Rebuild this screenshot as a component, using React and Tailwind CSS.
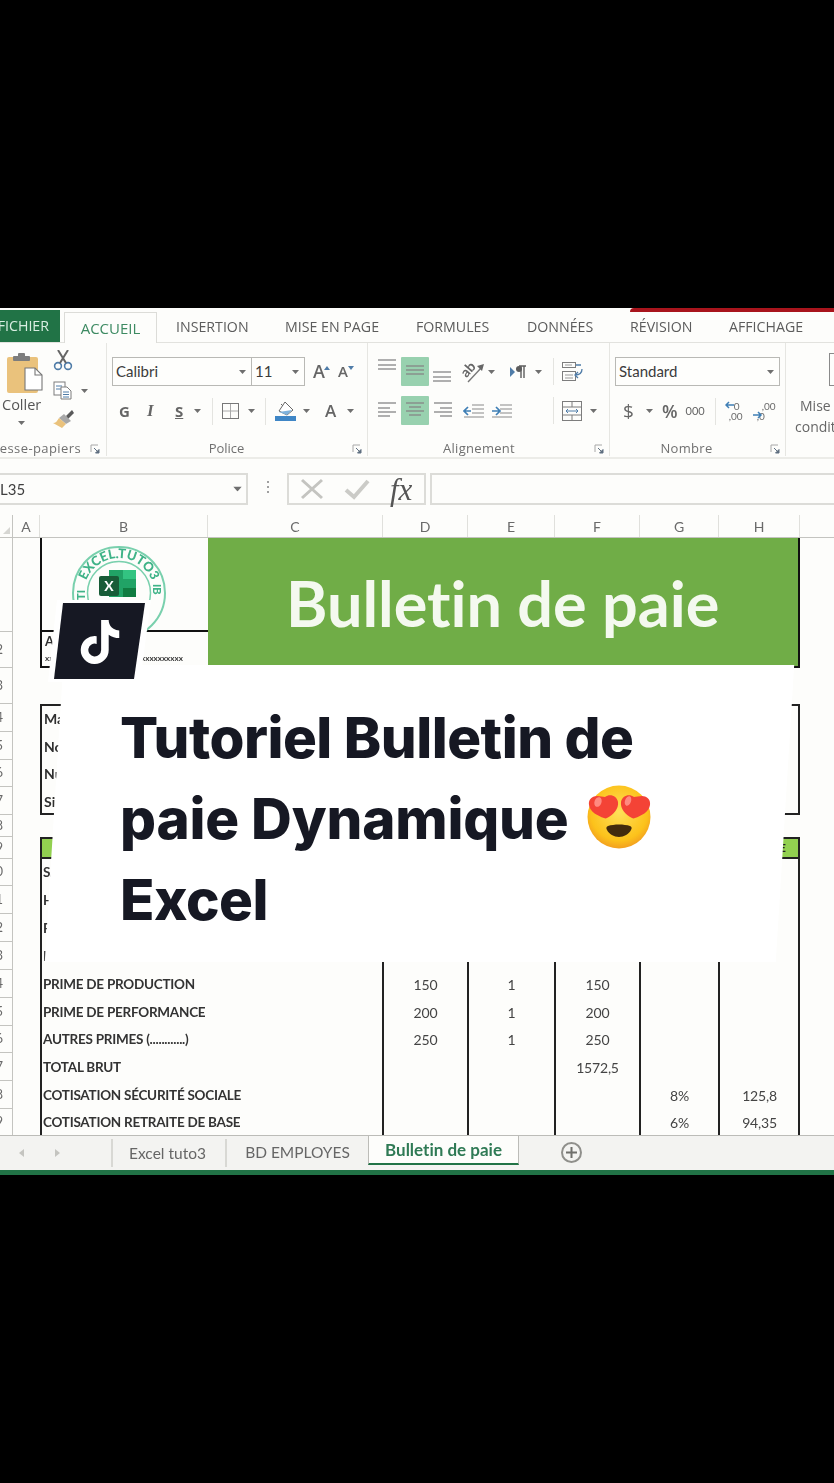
import React from "react";
import { FaTiktok } from "react-icons/fa6";

const Caret = ({ className = "" }) => (
  <svg width="7" height="4" viewBox="0 0 7 4" className={"shrink-0 " + className}><path d="M0 0h7L3.5 4z" fill="#6f6f6f" /></svg>
);

const Launcher = ({ className = "" }) => (
  <svg width="11" height="10" viewBox="0 0 11 10" className={"shrink-0 " + className}>
    <path d="M1 8V1h7" fill="none" stroke="#a8a8a8" />
    <path d="M4 4l5 5M9 5.5V9H5.5z" fill="#5f6f80" stroke="#5f6f80" />
  </svg>
);

const Lines = ({ rows, h = 29 }) => (
  <svg width="18" height={h} viewBox={`0 0 18 ${h}`} className="shrink-0">
    {rows.map(([x1, x2, y], i) => (
      <path key={i} d={`M${x1} ${y}H${x2}`} stroke="#858585" strokeWidth="1.3" />
    ))}
  </svg>
);

const Highlight = ({ children }) => (
  <div className="flex h-[29px] w-[28px] shrink-0 items-center justify-center rounded-[1px] bg-[#98d1af]">{children}</div>
);

const Sep = ({ className = "" }) => <div className={"h-[27px] w-px shrink-0 bg-[#e4e4e0] " + className} />;

const GroupLabel = ({ children, launcher = true, className = "" }) => (
  <div className={"mt-auto flex h-[14px] shrink-0 items-center text-[13px] text-[#707070] " + className}>
    <span className="flex-1 text-center whitespace-nowrap">{children}</span>
    {launcher && <Launcher className="mr-[4px]" />}
  </div>
);

const Combo = ({ label, className = "" }) => (
  <div className={"flex h-[29px] shrink-0 items-center justify-between border border-[#b9b9b5] bg-[#fefefc] pl-[3px] pr-[5px] text-[15px] text-[#3b3b3b] " + className}>
    <span>{label}</span>
    <Caret />
  </div>
);

const Clipboard = () => (
  <svg width="36" height="41" viewBox="0 0 36 41" className="shrink-0">
    <rect x="0" y="4" width="31" height="36" rx="2" fill="#eac27c" />
    <rect x="6" y="3" width="17" height="5" rx="1" fill="#7d7d7d" />
    <rect x="11" y="0" width="7" height="4" rx="1" fill="#7d7d7d" />
    <path d="M18 15h10l7 7v15H18z" fill="#fff" stroke="#777" strokeWidth="1.1" />
    <path d="M28 15v7h7" fill="none" stroke="#777" strokeWidth="1.1" />
  </svg>
);

const Scissors = () => (
  <svg width="20" height="21" viewBox="0 0 20 21" className="shrink-0">
    <circle cx="5" cy="16" r="3.4" fill="none" stroke="#4f7ca8" strokeWidth="1.6" />
    <circle cx="15" cy="16" r="3.4" fill="none" stroke="#4f7ca8" strokeWidth="1.6" />
    <path d="M7 13L15 0M13 13L5 0" stroke="#666" strokeWidth="2" />
  </svg>
);

const Copy = () => (
  <svg width="20" height="19" viewBox="0 0 20 19" className="shrink-0">
    <rect x="1" y="1" width="11" height="13" fill="#fff" stroke="#7d7d7d" />
    <path d="M3 5h6M3 8h6" stroke="#4f7ca8" />
    <path d="M8 6h6l4 4v8H8z" fill="#fff" stroke="#7d7d7d" />
    <path d="M10 11h6M10 13.5h6M10 16h6" stroke="#4f7ca8" />
  </svg>
);

const Brush = () => (
  <svg width="21" height="18" viewBox="0 0 21 18" className="shrink-0">
    <path d="M13 6l6-6 2 3-6 6z" fill="#5a5a5a" />
    <path d="M11 4l7 7-5 3-7-6z" fill="#a8a8a8" />
    <path d="M6 8l7 6-4 4-9-5c3 0 4-2 6-5z" fill="#eac27c" />
  </svg>
);

const BorderIcon = () => (
  <svg width="17" height="16" viewBox="0 0 17 16" className="shrink-0">
    <rect x=".5" y=".5" width="16" height="15" fill="none" stroke="#777" />
    <path d="M8.5 1v14M1 8h15" stroke="#aaa" />
  </svg>
);

const FillIcon = () => (
  <svg width="21" height="20" viewBox="0 0 21 20" className="shrink-0">
    <path d="M10 1l8 8-6 5-8-4z" fill="#fff" stroke="#666" />
    <path d="M4 11l8 3 5-5z" fill="#7fb2dc" />
    <path d="M8 5l-2-2" stroke="#666" />
    <rect x="0" y="15" width="21" height="5" fill="#3f86c6" />
  </svg>
);

const Orientation = () => (
  <svg width="23" height="22" viewBox="0 0 23 22" className="shrink-0">
    <text x="0" y="13" fontFamily="Lato, sans-serif" fontSize="14" fontWeight="700" fill="#666" transform="rotate(-48 7 10)">ab</text>
    <path d="M6 21L20 6" stroke="#777" strokeWidth="1.4" />
    <path d="M22 3l-7 2 5 5z" fill="#666" />
  </svg>
);

const Rtl = () => (
  <svg width="17" height="14" viewBox="0 0 17 14" className="shrink-0">
    <path d="M0 2l5 5-5 5z" fill="#4f7ca8" />
    <path d="M9 1h7M11 1v12M14 1v12" stroke="#5d5d5d" strokeWidth="1.4" />
    <circle cx="9" cy="4" r="3" fill="#5d5d5d" />
  </svg>
);

const IndentIcon = ({ flip }) => (
  <svg width="21" height="14" viewBox="0 0 21 14" className="shrink-0">
    <path d="M9 1h12M9 5h12M9 9h12M1 13h20" stroke="#8a8a8a" strokeWidth="1.2" />
    <path d={flip ? "M1 7h7M5 3l4 4-4 4" : "M8 7H1M5 3L1 7l4 4"} fill="none" stroke="#3f7fb5" strokeWidth="1.7" />
  </svg>
);

const Wrap = () => (
  <svg width="21" height="20" viewBox="0 0 21 20" className="shrink-0">
    <rect x=".5" y=".5" width="13" height="5" fill="none" stroke="#7d7d7d" />
    <rect x=".5" y="9.5" width="13" height="9" fill="none" stroke="#7d7d7d" />
    <path d="M3 3h7M3 13h8M3 16h8" stroke="#999" />
    <path d="M14 3h5M20 7c0 4-2 6-7 6M16 10l-3 3 3 3" fill="none" stroke="#4f7ca8" strokeWidth="1.3" />
  </svg>
);

const Merge = () => (
  <svg width="20" height="20" viewBox="0 0 20 20" className="shrink-0">
    <rect x=".5" y=".5" width="19" height="19" fill="none" stroke="#7d7d7d" />
    <path d="M1 6h18M1 14h18M10 1v5M10 14v5" stroke="#7d7d7d" />
    <path d="M4 10h12M4 10l2-2M4 10l2 2M16 10l-2-2M16 10l-2 2" stroke="#4f7ca8" fill="none" />
  </svg>
);

const DecimalIcon = ({ top, bottom, flip }) => (
  <div className="relative h-[20px] w-[21px] shrink-0 font-['Lato',sans-serif] text-[10px] leading-[10px] text-[#6b6b6b]">
    <div className="pl-[9px]">{top}</div>
    <div className="pl-[4px]">{bottom}</div>
    <svg width="10" height="8" viewBox="0 0 10 8" className={"absolute " + (flip ? "left-0 top-[10px]" : "left-0 top-0")}>
      <path d={flip ? "M0 4h8M5 1l3 3-3 3" : "M9 4H1M4 1L1 4l3 3"} fill="none" stroke="#3f7fb5" strokeWidth="1.5" />
    </svg>
  </div>
);

const Ribbon = () => (
  <div className="flex h-[116px] border-b-2 border-[#ecece8] font-['Open_Sans',sans-serif]">
    <div className="flex h-[113px] w-[107px] shrink-0 flex-col border-r border-[#e6e6e2]">
      <div className="flex">
        <div className="flex w-[50px] shrink-0 flex-col pl-[7px] pt-[10px]">
          <Clipboard />
          <div className="-ml-[5px] mt-[1px] text-[14.5px] leading-[20px] text-[#555]">Coller</div>
          <Caret className="ml-[11px] mt-[6px]" />
        </div>
        <div className="flex flex-col pl-[3px] pt-[7px]">
          <Scissors />
          <div className="mt-[10px] flex items-center">
            <Copy />
            <Caret className="ml-[8px]" />
          </div>
          <div className="mt-[10px]"><Brush /></div>
        </div>
      </div>
      <div className="mt-auto flex h-[14px] shrink-0 items-center justify-end text-[13px] tracking-[.4px] text-[#707070]">
        <span className="whitespace-nowrap">resse-papiers</span>
        <Launcher className="ml-[9px] mr-[5px]" />
      </div>
    </div>

    <div className="flex h-[113px] w-[261px] shrink-0 flex-col border-r border-[#e6e6e2] pl-[5px]">
      <div className="mt-[14px] flex h-[29px] shrink-0 items-center">
        <Combo label="Calibri" className="w-[140px] font-['Lato',sans-serif]" />
        <Combo label="11" className="w-[54px] -ml-px font-['Lato',sans-serif]" />
        <span className="ml-[8px] text-[18px] font-semibold text-[#666]">A</span>
        <svg width="6" height="4" className="-ml-px mb-[8px]"><path d="M0 4l3-4 3 4z" fill="#4f7ca8" /></svg>
        <span className="ml-[8px] text-[15px] font-semibold text-[#666]">A</span>
        <svg width="6" height="4" className="mb-[8px]"><path d="M0 0l3 4 3-4z" fill="#4f7ca8" /></svg>
      </div>
      <div className="mt-[10px] flex h-[30px] shrink-0 items-center text-[#666]">
        <span className="ml-[7px] w-[28px] text-[15px] font-bold">G</span>
        <span className="w-[28px] font-['Liberation_Serif',serif] text-[17px] font-bold italic">I</span>
        <span className="w-[19px] text-[15px] font-bold underline">S</span>
        <Caret />
        <Sep className="ml-[11px]" />
        <span className="ml-[9px]"><BorderIcon /></span>
        <Caret className="ml-[9px]" />
        <Sep className="ml-[10px]" />
        <span className="ml-[9px]"><FillIcon /></span>
        <Caret className="ml-[7px]" />
        <span className="ml-[15px] text-[17px] font-semibold">A</span>
        <Caret className="ml-[11px]" />
      </div>
      <GroupLabel className="-ml-[5px]">
        <span className="pr-[6px]">Police</span>
      </GroupLabel>
    </div>

    <div className="flex h-[113px] w-[242px] shrink-0 flex-col border-r border-[#e6e6e2] pl-[10px]">
      <div className="mt-[14px] flex h-[29px] shrink-0 items-center">
        <Lines rows={[[0, 18, 3], [0, 18, 8], [0, 18, 12]]} />
        <span className="ml-[5px]"><Highlight><Lines rows={[[0, 18, 9], [0, 18, 13], [0, 18, 17]]} /></Highlight></span>
        <span className="ml-[4px]"><Lines rows={[[0, 18, 15], [0, 18, 20], [0, 18, 24]]} /></span>
        <span className="ml-[11px]"><Orientation /></span>
        <Caret className="ml-[3px]" />
        <span className="ml-[15px]"><Rtl /></span>
        <Caret className="ml-[8px]" />
        <Sep className="ml-[11px]" />
        <span className="ml-[8px]"><Wrap /></span>
      </div>
      <div className="mt-[10px] flex h-[29px] shrink-0 items-center">
        <Lines rows={[[0, 18, 7], [0, 12, 12], [0, 18, 16], [0, 12, 20]]} />
        <span className="ml-[5px]"><Highlight><Lines rows={[[0, 18, 7], [3, 15, 11], [0, 18, 15], [3, 15, 19]]} /></Highlight></span>
        <span className="ml-[5px]"><Lines rows={[[0, 18, 7], [6, 18, 12], [0, 18, 16], [6, 18, 20]]} /></span>
        <span className="ml-[11px]"><IndentIcon /></span>
        <span className="ml-[7px]"><IndentIcon flip /></span>
        <Sep className="ml-[41px]" />
        <span className="ml-[8px]"><Merge /></span>
        <Caret className="ml-[8px]" />
      </div>
      <GroupLabel className="-ml-[10px]">
        <span className="pr-[4px] tracking-[.3px]">Alignement</span>
      </GroupLabel>
    </div>

    <div className="flex h-[113px] w-[176px] shrink-0 flex-col border-r border-[#e6e6e2] pl-[5px]">
      <Combo label="Standard" className="mt-[14px] w-[165px] font-['Lato',sans-serif]" />
      <div className="mt-[10px] flex h-[30px] shrink-0 items-center text-[#666]">
        <span className="ml-[8px] w-[20px] text-[19px]">$</span>
        <Caret className="ml-[3px]" />
        <span className="ml-[9px] text-[18px] font-semibold">%</span>
        <span className="ml-[8px] font-['Lato',sans-serif] text-[11px]">000</span>
        <Sep className="ml-[10px]" />
        <span className="ml-[9px]"><DecimalIcon top="0" bottom=",00" /></span>
        <span className="ml-[7px]"><DecimalIcon top=",00" bottom=",0" flip /></span>
      </div>
      <GroupLabel>
        <span className="pr-[12px] tracking-[.3px]">Nombre</span>
      </GroupLabel>
    </div>

    <div className="flex min-w-0 flex-1 flex-col items-start overflow-hidden text-[14px] leading-[21px] text-[#666]">
      <div className="ml-[43px] mt-[10px] h-[33px] w-[18px] shrink-0 border border-[#8a8a8a]" />
      <div className="ml-[14px] mt-[9px] whitespace-nowrap">Mise</div>
      <div className="ml-[9px] whitespace-nowrap">conditionnelle</div>
    </div>
  </div>
);

const FormulaBar = () => (
  <div className="flex h-[56px] items-start pt-[14px] font-['Lato',sans-serif]">
    <div className="flex h-[32px] w-[248px] shrink-0 items-center justify-between border-2 border-l-0 border-[#dcdcd8] pr-[5px] text-[15px] text-[#3f3f3f]">
      <span>L35</span>
      <Caret className="scale-125" />
    </div>
    <div className="ml-[19px] mt-[8px] flex w-[2px] shrink-0 flex-col gap-[3px]">
      <i className="h-[2px] bg-[#a0a0a0]" /><i className="h-[2px] bg-[#a0a0a0]" /><i className="h-[2px] bg-[#a0a0a0]" />
    </div>
    <div className="ml-[18px] flex h-[32px] w-[139px] shrink-0 items-center border-2 border-[#dcdcd8] pl-[11px]">
      <svg width="24" height="22" viewBox="0 0 24 22"><path d="M2 2l20 18M22 2L2 20" stroke="#c4c4c0" strokeWidth="3" /></svg>
      <svg width="26" height="22" viewBox="0 0 26 22" className="ml-[20px]"><path d="M2 12l8 7L24 3" fill="none" stroke="#cbcbc7" strokeWidth="4" /></svg>
      <span className="ml-[20px] font-['Liberation_Serif',serif] text-[31px] italic leading-none text-[#555]">fx</span>
    </div>
    <div className="ml-[4px] h-[32px] flex-1 border-2 border-r-0 border-[#dcdcd8]" />
  </div>
);

const headerCols = [["A", 27], ["B", 168], ["C", 175], ["D", 85], ["E", 87], ["F", 85], ["G", 79], ["H", 81]];

const HeaderRow = () => (
  <div className="flex h-[23px] border-b border-[#c4c4c0] font-['Lato',sans-serif] text-[14px] text-[#6a6a6a]">
    <div className="flex w-[13px] shrink-0 items-end border-r border-[#c4c4c0] pb-[3px] pl-[3px]">
      <svg width="7" height="7"><path d="M7 0v7H0z" fill="#d6d6d2" /></svg>
    </div>
    {headerCols.map(([l, w]) => (
      <div key={l} className="flex shrink-0 items-center justify-center border-r border-[#e0e0dc]" style={{ width: w }}>{l}</div>
    ))}
  </div>
);

const rowHeights = "94px 36px 36px 28px 28px 27px 28px 22px 22px 27px 28px 28px 28px 28px 28px 27px 28px 28px 27px";
const gridStyle = { gridTemplateColumns: "13px 27px 168px 175px 85px 87px 85px 79px 81px 1fr", gridTemplateRows: rowHeights };

const Gutter = ({ n }) => (
  <div className={"flex items-center justify-end overflow-hidden border-r border-b border-[#c4c4c0] text-[13px] text-[#6a6a6a] " + (n === 1 ? "pr-[12px]" : "pr-[9px]")} style={{ gridColumn: 1, gridRow: n }}>
    <span>{n}</span>
  </div>
);

const Place = ({ c, r, cs = 1, rs = 1, className = "", children }) => (
  <div className={className} style={{ gridColumn: `${c} / span ${cs}`, gridRow: `${r} / span ${rs}` }}>{children}</div>
);

const tableRows = [
  [10, "SALAIRE DE BASE", "", "", "", "", ""],
  [11, "HEURES SUPPLÉMENTAIRES", "", "", "", "", ""],
  [12, "PRIME D'ANCIENNETÉ", "", "", "", "", ""],
  [13, "INDEMNITÉ DE TRANSPORT", "50", "1", "50", "", ""],
  [14, "PRIME DE PRODUCTION", "150", "1", "150", "", ""],
  [15, "PRIME DE PERFORMANCE", "200", "1", "200", "", ""],
  [16, "AUTRES PRIMES (............)", "250", "1", "250", "", ""],
  [17, "TOTAL BRUT", "", "", "1572,5", "", ""],
  [18, "COTISATION SÉCURITÉ SOCIALE", "", "", "", "8%", "125,8"],
  [19, "COTISATION RETRAITE DE BASE", "", "", "", "6%", "94,35"],
];

const Logo = () => (
  <svg width="100" height="94" viewBox="0 0 100 94" className="ml-[27px] block">
    <defs>
      <path id="stampArc" d="M15 55a35 35 0 1 1 70 0" />
    </defs>
    <circle cx="50" cy="55" r="46" fill="none" stroke="#79d0ad" strokeWidth="2" />
    <circle cx="50" cy="55" r="31.5" fill="none" stroke="#79d0ad" strokeWidth="1.5" />
    <text fontFamily="Lato, sans-serif" fontSize="13" fontWeight="900" fill="#3fb388" textAnchor="middle">
      <textPath href="#stampArc" startOffset="50%">EXCEL.TUTO3</textPath>
    </text>
    <text x="0" y="0" transform="translate(16 62) rotate(-90)" fontFamily="Lato, sans-serif" fontSize="11" fontWeight="900" fill="#3fb388">TI</text>
    <text x="0" y="0" transform="translate(84 46) rotate(90)" fontFamily="Lato, sans-serif" fontSize="11" fontWeight="900" fill="#3fb388">IB</text>
    <rect x="40" y="32" width="27" height="27" fill="#21a366" />
    <rect x="54" y="32" width="13" height="9" fill="#33c481" />
    <rect x="54" y="50" width="13" height="9" fill="#107c41" />
    <rect x="30" y="38" width="20" height="20" rx="2" fill="#185c37" />
    <text x="40" y="53" textAnchor="middle" fontFamily="Lato, sans-serif" fontSize="14" fontWeight="700" fill="#fff">X</text>
  </svg>
);

const Sheet = () => (
  <div className="relative grid h-[597px] overflow-hidden font-['Lato',sans-serif] text-[#2f2f2f]" style={gridStyle}>
    {Array.from({ length: 19 }, (_, i) => <Gutter key={i} n={i + 1} />)}

    <Place c={3} r={1} className="border-b-2 border-l-2 border-[#111]"><Logo /></Place>
    <Place c={3} r={2} className="overflow-hidden border-b-2 border-l-2 border-[#111] pl-[3px] text-[13px] font-bold leading-[17px]">
      <div className="pt-[1px]">Adresse</div>
      <div className="whitespace-nowrap text-[8px] font-bold">xxxxxxxxxxxxxxxxxxxxxxxxxxxxxxxxx</div>
    </Place>
    <Place c={4} cs={6} r={1} rs={2} className="flex items-center border-b-2 border-r-2 border-[#111] bg-[#70ad47] pl-[78px] text-[63px] font-bold leading-none text-[#f4f9ef] [font-variant-ligatures:none]">
      Bulletin de paie
    </Place>

    <Place c={3} cs={7} r={4} rs={4} className="border-y-2 border-x-2 border-[#222]" />
    {["Matricule", "Nom", "Numéro", "Situation"].map((t, i) => (
      <Place key={t} c={3} r={4 + i} className="flex items-center pl-[4px] text-[14px] font-bold">{t}</Place>
    ))}

    <Place c={3} cs={7} r={9} className="flex items-center justify-end border-2 border-[#222] bg-[#92d050] pr-[12px] text-[12px] font-bold text-[#222]">RETENUE</Place>

    <Place c={3} cs={7} r={10} rs={10} className="border-x-2 border-[#222]" />
    {[4, 5, 6, 7, 8].map((c) => (
      <Place key={c} c={c + 1} r={10} rs={10} className="-ml-px border-l-2 border-[#222]" />
    ))}
    {tableRows.map(([r, label, d, e, f, g, h]) => (
      <React.Fragment key={r}>
        <Place c={3} r={r} className="z-10 flex items-center whitespace-nowrap pl-[3px] text-[13.5px] font-bold tracking-[-.25px] text-[#333]">{label}</Place>
        {[d, e, f, g, h].map((v, i) => (
          <Place key={i} c={5 + i} r={r} className="z-10 flex items-center justify-center text-[14px] tracking-[-.2px] text-[#444]">{v}</Place>
        ))}
      </React.Fragment>
    ))}
  </div>
);

const tabs = [["INSERTION", "ml-[19px] w-[109px]"], ["MISE EN PAGE", "w-[131px]"], ["FORMULES", "w-[111px]"], ["DONNÉES", "w-[103px]"], ["RÉVISION", "w-[99px]"], ["AFFICHAGE", "w-[90px]"]];

const TopTabs = () => (
  <div className="flex h-[35px] items-end border-b border-[#e2e2de] font-['Open_Sans',sans-serif] text-[14.2px] text-[#5c5c5c]">
    <div className="flex h-[32px] w-[60px] shrink-0 items-center justify-end bg-[#217346] pr-[11px] text-[#d9eee2]">FICHIER</div>
    <div className="-mb-px ml-[4px] flex h-[31px] w-[93px] shrink-0 items-center justify-center border border-b-0 border-[#dcdcd8] bg-[#fdfdfb] text-[15px] text-[#3d8a62]">ACCUEIL</div>
    {tabs.map(([t, m]) => (
      <div key={t} className={"flex h-[31px] shrink-0 items-center " + m}>{t}</div>
    ))}
  </div>
);

const BottomTabs = () => (
  <div className="flex h-[35px] border-t border-[#bcbcb8] bg-[#f3f3f1] font-['Lato',sans-serif] text-[15.5px] text-[#666]">
    <div className="flex w-[111px] shrink-0 items-center pl-[19px]">
      <svg width="5" height="8"><path d="M5 0v8L0 4z" fill="#c4c4c0" /></svg>
      <svg width="5" height="8" className="ml-[31px]"><path d="M0 0v8l5-4z" fill="#c4c4c0" /></svg>
    </div>
    <div className="my-[3px] w-[116px] shrink-0 border-l-2 border-r-2 border-[#d8d8d4] pr-[3px] text-center leading-[28px]">Excel tuto3</div>
    <div className="flex w-[141px] shrink-0 items-center justify-center">BD EMPLOYES</div>
    <div className="flex h-[29px] w-[151px] shrink-0 items-center justify-center border-b-[2px] border-l border-r border-t-0 border-[#217346] border-l-[#bcbcb8] border-r-[#bcbcb8] bg-[#fdfdfb] text-[17px] font-bold text-[#2f7a55] [font-variant-ligatures:none]">Bulletin de paie</div>
    <div className="ml-[42px] mt-[6px] flex h-[21px] w-[21px] items-center justify-center rounded-full border-2 border-[#8f8f8b]">
      <svg width="11" height="11"><path d="M5.5 0v11M0 5.5h11" stroke="#6f6f6b" strokeWidth="2" /></svg>
    </div>
  </div>
);

const Emoji = () => (
  <svg width="64" height="64" viewBox="0 0 64 64" className="ml-[6px] inline-block align-[-10px]">
    <defs>
      <radialGradient id="faceGrad" cx=".5" cy=".42" r=".6">
        <stop offset="0" stopColor="#ffe15a" />
        <stop offset=".75" stopColor="#fcc21b" />
        <stop offset="1" stopColor="#f19a20" />
      </radialGradient>
    </defs>
    <circle cx="32" cy="32" r="31.5" fill="url(#faceGrad)" />
    <path d="M21 41c6-2 16-2 22 0 2 .7 2 2.500 1 4-2 4-7 7-12 7s-10-3-12-7c-1-1.500-1-3.300 1-4z" fill="#422b0d" />
    <path d="M17 12c5-4 12-1 13 5 1 7-5 13-11 16-1 .5-2 .5-3 0C10 31 2 27 1 20c-1-6 4-9 8-9 3 0 6 1 8 1z" fill="#f44336" transform="translate(1 0)" />
    <path d="M47 12c-5-4-12-1-13 5-1 7 5 13 11 16 1 .5 2 .5 3 0 6-2 14-6 15-13 1-6-4-9-8-9-3 0-6 1-8 1z" fill="#f44336" />
    <ellipse cx="11" cy="17" rx="3.5" ry="5" fill="#ff8a80" transform="rotate(20 11 17)" />
    <ellipse cx="41" cy="16" rx="3" ry="5" fill="#ff8a80" transform="rotate(20 41 16)" />
  </svg>
);

const Overlay = () => (
  <>
    <div className="absolute left-[54px] top-[665px] h-[297px] w-[731px] skew-x-[-3.550deg] bg-white" />
    <div className="absolute left-[120px] top-[697px] w-[670px] font-['Inter',sans-serif] text-[56.5px] font-extrabold leading-[81px] tracking-[-.5px] text-[#161823]">
      <div>Tutoriel Bulletin de</div>
      <div className="tracking-[-.2px]">paie Dynamique <Emoji /></div>
      <div>Excel</div>
    </div>
    <div className="absolute left-[45px] top-[600px] h-[82px] w-[109px]">
      <svg width="109" height="82" viewBox="0 0 109 82" className="absolute inset-0">
        <path d="M12 0h94L95 82H3z" fill="#fff" />
        <path d="M18 3h82L89 79H9z" fill="#161823" />
      </svg>
      <FaTiktok className="absolute left-[33px] top-[20px] text-white" size={44} />
    </div>
  </>
);

export default function App() {
  return (
    <div className="relative h-[1483px] w-[834px] overflow-hidden bg-black">
      <div className="absolute left-[630px] top-[308px] z-10 h-[4px] w-[204px] rounded-tl-sm bg-[#a8141c]" />
      <div className="pt-[308px]">
        <div className="h-[867px] bg-[#fdfdfb] blur-[.4px]">
          <TopTabs />
          <Ribbon />
          <FormulaBar />
          <HeaderRow />
          <Sheet />
          <BottomTabs />
          <div className="h-[5px] bg-[#217346]" />
        </div>
      </div>
      <Overlay />
    </div>
  );
}
